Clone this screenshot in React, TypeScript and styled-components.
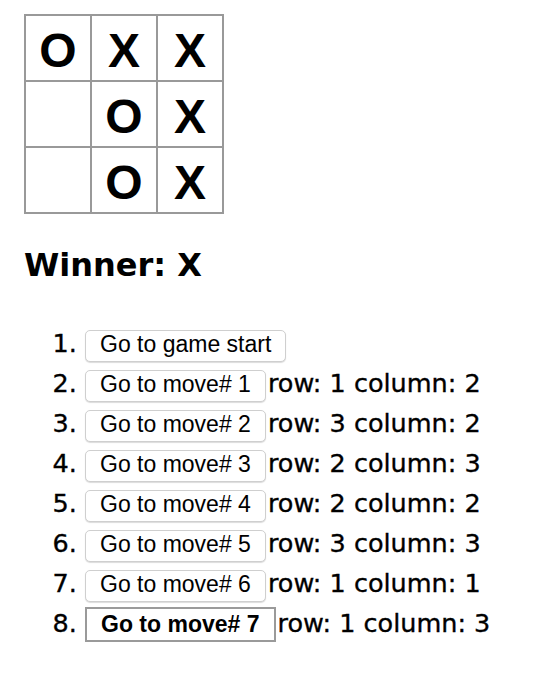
import styled, { createGlobalStyle } from "styled-components";

const GlobalStyle = createGlobalStyle`
  body {
    margin: 0;
    background: #ffffff;
    color: #000000;
  }
`;

const Game = styled.div`
  display: flex;
  flex-flow: column nowrap;
  align-items: flex-start;
  padding: 14px 24px;
`;

const Board = styled.div`
  display: grid;
  grid-template-columns: repeat(3, 64px);
  grid-template-rows: repeat(3, 64px);
  gap: 2px;
  padding: 2px;
  background: #999999;
`;

const Square = styled.div`
  display: flex;
  align-items: center;
  justify-content: center;
  padding-top: 5px;
  box-sizing: border-box;
  background: #ffffff;
  font-family: "Liberation Sans", Arial, sans-serif;
  font-weight: 700;
  font-size: 48px;
  line-height: 1;
`;

const Status = styled.div`
  margin-top: 32px;
  font-family: "DejaVu Sans", sans-serif;
  font-weight: 700;
  font-size: 32px;
  line-height: 38px;
`;

const MoveList = styled.ol`
  margin: 39px 0 0;
  padding-left: 61px;
  font-family: "DejaVu Sans", sans-serif;
  font-size: 25.5px;
  line-height: 40px;
  -webkit-text-stroke: 0.35px #000000;
`;

const Move = styled.li`
  white-space: nowrap;
`;

const MoveButton = styled.button<{ $current?: boolean }>`
  height: ${({ $current }) => ($current ? "35px" : "32px")};
  margin: 0;
  padding: ${({ $current }) => ($current ? "0 14px" : "0 14px 2px")};
  box-sizing: border-box;
  vertical-align: baseline;
  background: #ffffff;
  color: #000000;
  font-family: "Liberation Sans", Arial, sans-serif;
  font-size: 23px;
  font-weight: ${({ $current }) => ($current ? 700 : 400)};
  -webkit-text-stroke: 0;
  border: ${({ $current }) =>
    $current ? "2px solid #9a9a9a" : "1px solid #cfcfcf"};
  border-radius: ${({ $current }) => ($current ? "0" : "5px")};
  box-shadow: ${({ $current }) =>
    $current ? "none" : "0 1px 1px rgba(0, 0, 0, 0.14)"};
  cursor: pointer;
`;

const Location = styled.span`
  margin-left: 2px;
`;

const squares = ["O", "X", "X", "", "O", "X", "", "O", "X"];

const moves: { row: number; col: number }[] = [
  { row: 1, col: 2 },
  { row: 3, col: 2 },
  { row: 2, col: 3 },
  { row: 2, col: 2 },
  { row: 3, col: 3 },
  { row: 1, col: 1 },
  { row: 1, col: 3 },
];

export default function App() {
  const current = moves.length;

  return (
    <Game>
      <GlobalStyle />
      <Board>
        {squares.map((value, i) => (
          <Square key={i}>{value}</Square>
        ))}
      </Board>
      <Status>Winner: X</Status>
      <MoveList>
        <Move>
          <MoveButton>Go to game start</MoveButton>
        </Move>
        {moves.map((m, i) => (
          <Move key={i}>
            <MoveButton $current={i + 1 === current}>
              Go to move# {i + 1}
            </MoveButton>
            <Location>
              row: {m.row} column: {m.col}
            </Location>
          </Move>
        ))}
      </MoveList>
    </Game>
  );
}
